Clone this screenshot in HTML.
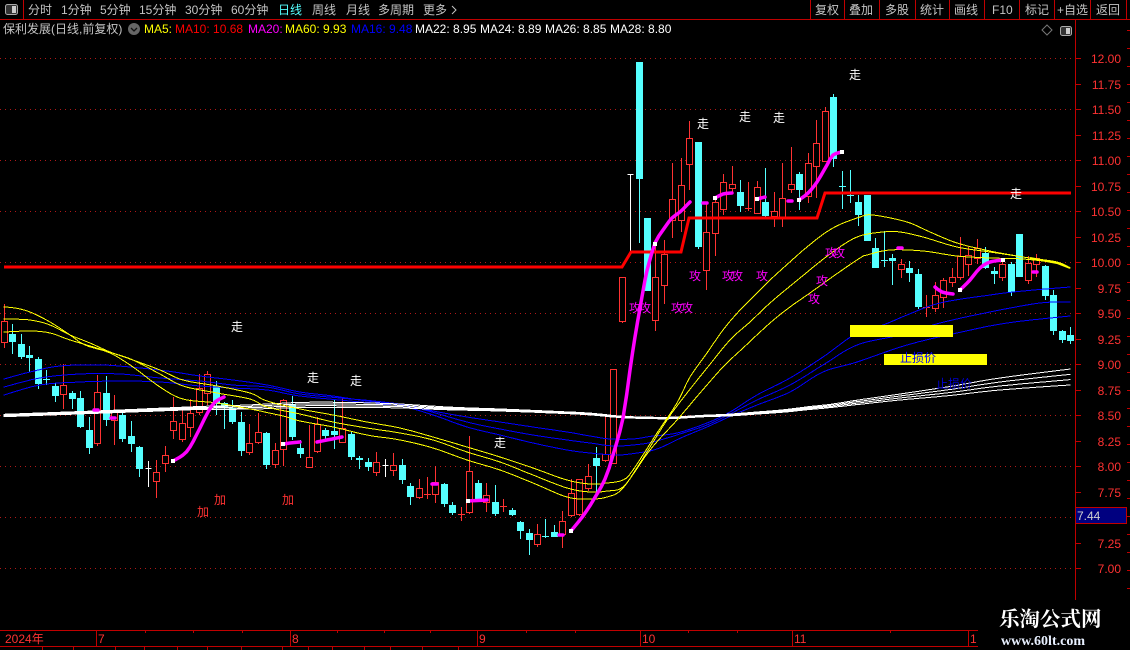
<!DOCTYPE html>
<html><head><meta charset="utf-8"><style>
html,body{margin:0;padding:0;background:#000;width:1130px;height:650px;overflow:hidden}
svg{display:block}
text{font-family:"Liberation Sans","WenQuanYi Zen Hei","Noto Sans CJK SC",sans-serif;font-size:12px}
.t text{fill:#c4c4c4}
.z text{font-family:"WenQuanYi Zen Hei","Noto Sans CJK SC",sans-serif;text-anchor:middle}
.a text{fill:#ff3232;text-anchor:end}
</style></head><body>
<svg id="s" xmlns="http://www.w3.org/2000/svg" width="1130" height="650" viewBox="0 0 1130 650">
<rect width="1130" height="650" fill="#000"/>
<g id="grid"></g>
<g id="candles" shape-rendering="crispEdges"></g>
<g id="lines" fill="none"></g>
<path d="M4 267H622L631 252H681L689 218H817L825 193H1071" fill="none" stroke="#f00" stroke-width="3"/>
<g id="mag" fill="none"></g>
<g id="wsq" fill="#fff" shape-rendering="crispEdges"></g>
<g fill="#ff0" shape-rendering="crispEdges"><rect x="850" y="325" width="103" height="12"/><rect x="884" y="354" width="103" height="11"/></g>
<g class="z">
<g fill="#fff"><text x="237" y="331">走</text><text x="313" y="382">走</text><text x="356" y="385">走</text><text x="500" y="447">走</text><text x="703" y="128">走</text><text x="745" y="121">走</text><text x="779" y="122">走</text><text x="855" y="79">走</text><text x="1016" y="198">走</text></g>
<g fill="#ff3232"><text x="203" y="516">加</text><text x="220" y="504">加</text><text x="288" y="504">加</text></g>
<g fill="#f0f"><text x="695" y="280">攻</text><text x="728" y="280">攻</text><text x="737" y="280">攻</text><text x="762" y="280">攻</text><text x="635" y="312">攻</text><text x="645" y="312">攻</text><text x="677" y="312">攻</text><text x="687" y="312">攻</text><text x="831" y="257">攻</text><text x="839" y="257">攻</text><text x="822" y="285">攻</text><text x="814" y="303">攻</text></g>
<g fill="#00f"><text x="918" y="362">止损价</text></g>
<g fill="#0000d0"><text x="954" y="388">止损价</text></g>
</g>
<g stroke="#c00000" fill="none" shape-rendering="crispEdges">
<path d="M0 19.5H1130M23.5 0V19.5M810.5 0V19.5M844.5 0V19.5M879.5 0V19.5M915.5 0V19.5M949.5 0V19.5M984.5 0V19.5M1019.5 0V19.5M1054.5 0V19.5M1090.5 0V19.5M1126.5 0V19.5M1075.5 20V600"/>
<path d="M0 630.5H978M0 646.5H978M96.5 630V646M290.5 630V646M477.5 630V646M640.5 630V646M792.5 630V646M968.5 630V646M145.5 630V633M193.5 630V633M242.5 630V633M337.5 630V633M384.5 630V633M430.5 630V633M526.5 630V633M575.5 630V633M688.5 630V633M737.5 630V633M890.5 630V633M42.5 646V650M73.5 646V650M115.5 646V650M144.5 646V650M177.5 646V650M207.5 646V650M241.5 646V650M282.5 646V650M308.5 646V650M332.5 646V650M364.5 646V650M390.5 646V650M422.5 646V650M458.5 646V650"/>
</g>
<g stroke="#c00000" shape-rendering="crispEdges" id="ticks"></g>
<g class="t">
<text x="28" y="14">分时</text><text x="61" y="14">1分钟</text><text x="100" y="14">5分钟</text><text x="139" y="14">15分钟</text><text x="185" y="14">30分钟</text><text x="231" y="14">60分钟</text><text x="278" y="14" style="fill:#55ffff">日线</text><text x="312" y="14">周线</text><text x="346" y="14">月线</text><text x="378" y="14">多周期</text><text x="423" y="14">更多</text>
<text x="815" y="14">复权</text><text x="849" y="14">叠加</text><text x="885" y="14">多股</text><text x="920" y="14">统计</text><text x="954" y="14">画线</text><text x="992" y="14">F10</text><text x="1025" y="14">标记</text><text x="1057" y="14">+自选</text><text x="1096" y="14">返回</text>
<text x="3" y="33">保利发展(日线,前复权)</text>
</g>
<path d="M452 6L456 10L452 14" fill="none" stroke="#c4c4c4"/>
<rect x="5.5" y="4.5" width="12" height="10" rx="2" fill="#333" stroke="#aaa"/><rect x="12" y="6" width="4" height="7" fill="#ccc"/>
<circle cx="134" cy="29" r="6" fill="#666"/><path d="M131 28L134 31L137 28" fill="none" stroke="#111" stroke-width="1.3"/>
<path d="M1047 25L1052 30L1047 35L1042 30Z" fill="none" stroke="#777"/>
<rect x="1060.5" y="26.5" width="11" height="9" rx="2" fill="#333" stroke="#aaa"/><rect x="1066" y="28" width="4" height="6" fill="#ccc"/>
<text x="144" y="33" fill="#ff0">MA5:</text>
<text x="175" y="33" fill="#f00">MA10: 10.68</text>
<text x="248" y="33" fill="#f0f">MA20:</text>
<text x="285" y="33" fill="#ff0">MA60: 9.93</text>
<text x="351" y="33" fill="#00f">MA16: 9.48</text>
<text x="415" y="33" fill="#fff">MA22: 8.95</text>
<text x="480" y="33" fill="#fff">MA24: 8.89</text>
<text x="545" y="33" fill="#fff">MA26: 8.85</text>
<text x="610" y="33" fill="#fff">MA28: 8.80</text>
<g class="a">
<text x="1121" y="63">12.00</text><text x="1121" y="89">11.75</text><text x="1121" y="114">11.50</text><text x="1121" y="140">11.25</text><text x="1121" y="165">11.00</text><text x="1121" y="191">10.75</text><text x="1121" y="216">10.50</text><text x="1121" y="242">10.25</text><text x="1121" y="267">10.00</text><text x="1121" y="293">9.75</text><text x="1121" y="318">9.50</text><text x="1121" y="344">9.25</text><text x="1121" y="369">9.00</text><text x="1121" y="395">8.75</text><text x="1121" y="420">8.50</text><text x="1121" y="446">8.25</text><text x="1121" y="471">8.00</text><text x="1121" y="497">7.75</text><text x="1121" y="548">7.25</text><text x="1121" y="573">7.00</text>
</g>
<rect x="1075.5" y="507.5" width="51" height="16" fill="#000080" stroke="#c00000" shape-rendering="crispEdges"/>
<text x="1077" y="520" fill="#d0d0d0">7.44</text>
<text x="5" y="643" fill="#ff3232">2024年</text>
<g fill="#ff3232"><text x="98" y="643">7</text><text x="292" y="643">8</text><text x="479" y="643">9</text><text x="642" y="643">10</text><text x="794" y="643">11</text><text x="970" y="643">1</text></g>
<rect x="978" y="601" width="152" height="49" fill="#000"/>
<text x="999" y="626" style="font-family:'Noto Serif CJK SC','Liberation Serif',serif;font-size:20.5px;font-weight:700" fill="#fff">乐淘公式网</text>
<text x="1001" y="645" style="font-family:'Liberation Serif',serif;font-size:14px;font-weight:700" fill="#e8f0ff">www.60lt.com</text>
</svg>
<script>
(function(){
var NS='http://www.w3.org/2000/svg';
function el(p,n,a){var e=document.createElementNS(NS,n);for(var k in a)e.setAttribute(k,a[k]);document.getElementById(p).appendChild(e);return e}
for(var k=0;k<11;k++){var y=58.5+51*k;el('grid','path',{d:'M0 '+y+'H1075',stroke:'#b01818','stroke-dasharray':'1 4',fill:'none','shape-rendering':'crispEdges'})}
var td='';for(var k=0;k<21;k++){var y=Math.round(59+25.5*k)-.5;td+='M1076 '+y+'H1081';}
for(var y=30;y<600;y+=18){td+='M1127 '+(y+.5)+'H1130';}
el('ticks','path',{d:td,fill:'none'});
var C=[['r',304,321,342,348],['c',324,334,342,354],['c',334,344,357,359],['c',346,355,358,372],['c',357,359,384,389],['c',370,379,380,385],['c',383,386,396,402],['r',364,385,394,409],['c',391,393,399,409],['c',391,398,427,428],['c',417,430,448,454],['r',375,392,443,446],['c',376,393,420,426],['r',395,411,420,445],['c',411,415,439,442],['c',421,436,444,452],['c',446,447,469,477],['w',461,468,468,487],['r',460,472,481,498],['r',446,455,463,472],['r',397,421,430,439],['r',410,423,439,442],['r',399,413,427,437],['r',374,388,412,415],['r',371,374,393,405],['c',381,386,404,415],['c',402,403,408,429],['c',400,408,422,424],['c',412,422,451,456],['r',424,443,452,455],['r',413,432,442,444],['c',432,433,465,469],['r',443,450,464,468],['r',399,400,449,466],['c',396,404,437,440],['c',440,448,454,458],
['r',425,457,467,467],['r',417,424,451,453],['c',428,430,436,441],['c',400,431,435,449],['r',398,428,442,442],['c',432,434,457,460],['c',456,458,460,469],['c',458,462,467,471],['r',452,462,472,476],['w',459,465,465,477],['r',453,465,470,476],['c',459,465,480,484],['c',483,486,497,505],['r',479,488,497,499],['R',477,494,494,499],['r',466,482,494,503],['c',483,484,504,507],['c',502,505,513,515],['R',507,514,514,521],['r',436,471,512,514],['c',480,483,500,502],['r',483,495,502,512],['c',485,502,514,516],['R',499,506,506,512],['c',508,510,515,516],['c',521,522,531,539],['c',529,533,540,555],['r',524,534,544,547],['C',519,536,536,538],['c',525,532,537,537],['r',511,521,534,548],['r',479,493,515,517],['r',479,479,514,516],['r',464,476,488,491],['c',447,458,466,493],['r',414,454,460,462],['r',369,369,463,463],
['r',277,277,321,323],['w',174,174,174,252],['c',62,62,179,243],['c',218,218,291,291],['r',242,277,320,331],['r',240,254,285,304],['r',163,199,220,238],['r',158,185,220,232],['r',121,138,164,190],['c',142,142,247,249],['r',203,232,270,290],['r',197,202,233,256],['r',174,182,209,215],['r',166,184,188,193],['c',180,192,206,212],['R',182,208,208,211],['r',181,187,213,213],['c',168,202,216,217],['r',192,211,216,227],['r',163,198,217,227],['r',147,184,189,193],['c',172,174,190,210],['r',153,163,196,203],['r',120,143,166,198],['r',107,111,161,161],['c',94,97,159,167],['C',171,186,186,209],['C',170,195,195,203],['c',195,202,215,226],['c',195,195,241,241],['c',238,248,268,268],['C',231,260,260,267],['c',254,258,261,285],['r',259,264,269,278],['c',261,268,273,282],['c',269,274,307,309],['R',295,307,307,317],['r',282,295,308,312],['r',278,280,297,308],['r',268,277,282,287],['r',237,256,277,280],['r',247,255,264,276],['r',239,248,258,264],['c',247,253,268,269],['c',267,271,274,284],['r',261,264,277,281],['c',262,264,292,296],['c',234,234,277,277],['r',256,263,280,284],['r',254,258,264,277],['c',265,266,296,300],['c',290,295,331,335],['c',330,331,340,343],['c',327,335,341,344]];
var R='#ff3232',B='#55ffff';
var rp='',cp='',cf='',wp='',bg='';
C.forEach(function(c,i){
 var x=Math.floor(4.5+8.46*i)+.5,t=c[0],h=c[1],a=c[2],b=c[3],l=c[4];
 var wick='M'+x+' '+h+'V'+a+'M'+x+' '+b+'V'+l;
 if(t=='r'){rp+=wick;bg+='M'+(x-3)+' '+(a+.5)+'h6v'+(b-a)+'h-6z';}
 else if(t=='c'){cp+=wick;cf+='M'+(x-3.5)+' '+a+'h7v'+(b-a)+'h-7z';}
 else if(t=='R'){rp+='M'+x+' '+h+'V'+l+'M'+(x-3.5)+' '+(a+.5)+'h7';}
 else if(t=='C'){cp+='M'+x+' '+h+'V'+l+'M'+(x-3.5)+' '+(a+.5)+'h7';}
 else {wp+='M'+x+' '+h+'V'+l+'M'+(x-3)+' '+(a+.5)+'h6';}
});
el('candles','path',{d:rp,stroke:R,fill:'none'});
el('candles','path',{d:cp,stroke:B,fill:'none'});
el('candles','path',{d:bg,stroke:R,fill:'#000'});
el('candles','path',{d:cf,fill:B});
el('candles','path',{d:wp,stroke:'#fff',fill:'none'});
function sm(p){var out=[];for(var i=0;i<p.length-1;i++){var p0=p[Math.max(i-1,0)],p1=p[i],p2=p[i+1],p3=p[Math.min(i+2,p.length-1)];var n=Math.max(2,Math.ceil((p2[0]-p1[0])/4));for(var j=0;j<n;j++){var s=j/n,s2=s*s,s3=s2*s;out.push([.5*(2*p1[0]+(p2[0]-p0[0])*s+(2*p0[0]-5*p1[0]+4*p2[0]-p3[0])*s2+(3*p1[0]-p0[0]-3*p2[0]+p3[0])*s3),.5*(2*p1[1]+(p2[1]-p0[1])*s+(2*p0[1]-5*p1[1]+4*p2[1]-p3[1])*s2+(3*p1[1]-p0[1]-3*p2[1]+p3[1])*s3)])}}out.push(p[p.length-1]);return out}
function pl(p,col,w,crisp){var d=sm(p).map(function(q){return q[0].toFixed(1)+','+q[1].toFixed(1)}).join(' ');return {points:d,stroke:col,'stroke-width':w,'shape-rendering':crisp?'crispEdges':'auto','stroke-linejoin':'round','stroke-linecap':'round'}}
function L(p,c,w){el('lines','polyline',pl(p,c,w,true))}
[[[4,379],[30,372],[60,366],[100,365],[130,367],[167,371],[200,376],[233,380],[267,385],[300,392],[333,396],[367,401],[400,404],[433,411],[467,417],[500,422],[533,427],[567,432],[590,436],[610,439],[633,439],[653,436],[677,433],[707,423],[730,412],[757,395],[790,378],[823,357],[857,333],[883,325],[907,315],[940,303],[990,295],[1023,291],[1070,287]],
[[4,387],[40,378],[80,374],[120,374],[160,378],[200,381],[233,385],[267,387],[300,394],[340,398],[383,402],[417,408],[467,422],[500,429],[533,435],[567,440],[590,443],[613,446],[633,445],[653,442],[683,433],[707,425],[730,414],[757,400],[790,385],[823,365],[857,345],[900,335],[940,323],[990,312],[1040,303],[1070,302]],
[[4,395],[40,385],[80,382],[120,381],[160,382],[200,386],[233,388],[267,390],[300,396],[350,401],[400,406],[433,415],[467,427],[500,435],[533,443],[567,450],[590,453],[617,455],[637,453],[657,449],[683,437],[707,427],[731,416],[757,405],[790,392],[823,372],[857,362],[907,345],[957,333],[1007,323],[1070,316]]
].forEach(function(p){L(p,'#0000ff',1)});
var W=[[4,415.5,.8],[100,412,.8],[150,410,.9],[200,408,1],[250,407,1.4],[300,405,1.7],[350,405,1.7],[400,406,1.3],[450,408.5,.9],[500,410,.7],[550,412,.6],[590,414,.6],[623,417,.5],[667,418,.5],[703,416,.5],[730,415,.6],[757,413,.7],[783,411,.8],[810,408,1],[830,406,1.1],[860,402,1.5],[900,397,2],[950,391,3],[1000,384,4],[1070,377,5.3]];
[-1.5,-.5,.5,1.5].forEach(function(k){L(W.map(function(q){return [q[0],q[1]+k*q[2]]}),'#fff',1)});
var Y1=[[4,332],[30,331],[50,333],[70,340],[100,349],[130,359],[160,370],[183,380],[217,386],[250,393],[267,401],[300,409],[333,415],[367,422],[400,428],[433,437],[467,447],[500,457],[533,468],[567,480],[590,484],[607,483],[623,480],[633,470],[657,433],[677,403],[690,377],[707,353],[723,330],[740,310],[757,293],[770,280],[807,247],[833,228],[860,217],[873,215],[907,222],[930,232],[957,243],[990,251],[1023,257],[1057,262],[1070,268]];
var Y2=[[4,319],[30,320],[50,325],[70,335],[90,343],[110,352],[133,360],[160,374],[183,386],[217,393],[250,399],[267,407],[300,414],[333,422],[367,428],[400,433],[433,440],[467,452],[500,462],[533,475],[567,488],[590,492],[607,491],[623,487],[640,463],[667,420],[687,393],[707,368],[730,340],[750,322],[770,303],[800,278],[830,254],[857,237],[883,232],[900,232],[923,237],[957,247],[990,252],[1023,257],[1057,263],[1070,268]];
var Y3=[[4,307],[15,308],[30,312],[50,322],[70,335],[85,345],[110,353],[133,367],[160,387],[183,399],[217,403],[250,409],[283,416],[300,421],[333,427],[367,435],[400,440],[433,448],[467,460],[500,470],[533,483],[567,497],[590,499],[607,497],[623,488],[650,450],[677,420],[700,393],[723,367],[743,348],[770,323],[790,307],[810,293],[835,275],[860,258],[867,255],[890,250],[923,251],[957,256],[990,258],[1023,259],[1057,263],[1070,268]];
[Y1,Y2,Y3].forEach(function(p){L(p,'#ffff00',1)});
el('lines','path',{d:'M1030 258L1057 263L1070 268',stroke:'#ffff00','stroke-width':2});
var M=[[[173,461],[183,455],[190,447],[200,428],[208,412],[215,402],[224,397]],[[283,444],[290,443],[300,442]],[[94,410],[98,410]],[[111,418],[115,418]],[[317,442],[342,437]],[[432,484],[437,484]],[[468,501],[487,500]],[[559,535],[563,535]],[[571,531],[583,516],[594,499],[605,479],[613,455],[623,418],[630,370],[635,337],[640,308],[645,280],[649,263],[655,243],[663,230],[672,218],[680,212],[690,202]],[[703,203],[707,203]],[[715,198],[723,194],[732,193]],[[757,199],[765,197]],[[788,201],[792,201]],[[799,200],[808,193],[817,182],[827,165],[833,155],[842,152]],[[898,248],[902,248]],[[935,287],[942,292],[953,294]],[[960,290],[970,280],[980,268],[990,262],[1003,260]],[[1033,272],[1037,272]]];
M.forEach(function(p){el('mag','polyline',pl(p,'#ff00ff',3.5,false))});
[[173,461],[283,444],[468,501],[571,531],[655,244],[715,198],[757,199],[799,200],[842,152],[960,290],[1003,260]].forEach(function(q){el('wsq','rect',{x:q[0]-2,y:q[1]-2,width:4,height:4})});
})();
</script>
</body></html>
